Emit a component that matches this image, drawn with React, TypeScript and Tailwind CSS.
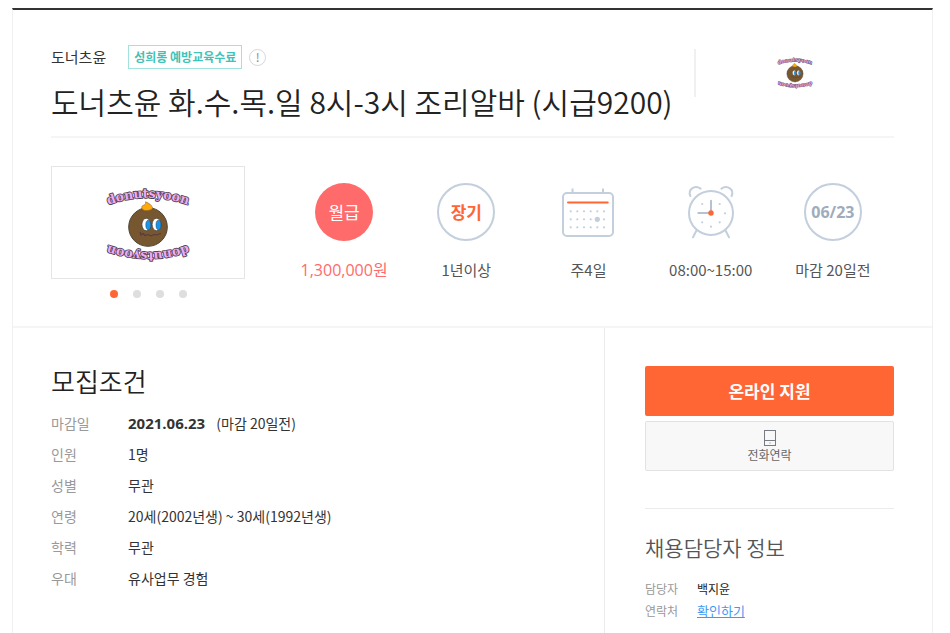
import { useState, type ReactNode } from "react";
import clsx from "clsx";

interface Row {
  label: string;
  value: ReactNode;
}

const CONDITIONS: Row[] = [
  {
    label: "마감일",
    value: (
      <>
        <strong className="mr-2 font-['Open_Sans',sans-serif] text-[15px] font-bold">2021.06.23</strong> (마감 20일전)
      </>
    ),
  },
  { label: "인원", value: "1명" },
  { label: "성별", value: "무관" },
  { label: "연령", value: "20세(2002년생) ~ 30세(1992년생)" },
  { label: "학력", value: "무관" },
  { label: "우대", value: "유사업무 경험" },
];

const DonutLogo = ({ id, className }: { id: string; className: string }) => {
  const word = (
    <text
      fontFamily="DejaVu Serif, serif"
      fontWeight="bold"
      fontSize="12.5"
      fill="#efabf5"
      stroke="#4f4452"
      strokeWidth="1.8"
      strokeLinejoin="round"
      paintOrder="stroke"
      textAnchor="middle"
    >
      <textPath href={`#${id}`} startOffset="50%">
        donutsyoon
      </textPath>
    </text>
  );

  return (
    <svg viewBox="0 0 84 76" className={className} overflow="visible" role="img" aria-label="donutsyoon">
      <defs>
        <path id={id} d="M-5 20.5 Q42 1 89 20.5" />
      </defs>
      {word}
      <g transform="rotate(180 42 38)">{word}</g>
      <circle cx="42" cy="40" r="19.3" fill="#775730" stroke="#4f4538" strokeWidth="1" />
      <path
        d="M36 21.5 C35 18 38 18.5 39 17.5 C40 16.5 39.5 15.5 39.5 14.8 C43 16 45.5 18 46.5 20.5 C47.5 23.5 37 25 36 21.5Z"
        fill="#ffa90a"
        stroke="#93692c"
        strokeWidth="0.6"
      />
      <ellipse cx="40.3" cy="37.5" rx="4.4" ry="6.2" fill="#fff" stroke="#40372c" strokeWidth="0.7" />
      <ellipse cx="42.3" cy="38" rx="2.5" ry="4.7" fill="#1595ec" stroke="#263e58" strokeWidth="0.5" />
      <ellipse cx="50.5" cy="37.5" rx="4.4" ry="6.2" fill="#fff" stroke="#40372c" strokeWidth="0.7" />
      <ellipse cx="52.5" cy="38" rx="2.5" ry="4.7" fill="#1595ec" stroke="#263e58" strokeWidth="0.5" />
      <path
        d="M34 45 L35 48 L37 46.5 L39 48.5 L42 47.5 L45 49 L48 47.5 L51 48 L54 46.5 L55 47"
        fill="none"
        stroke="#573b42"
        strokeWidth="1.1"
      />
    </svg>
  );
};

const CalendarIcon = () => (
  <svg viewBox="0 -1 58 58" className="size-[58px]" fill="none" stroke="#c3cfdd" strokeWidth="2">
    <rect x="4" y="9" width="50" height="43" rx="4" />
    <path d="M13.5 4.5V9M44 4.5V9" />
    <path d="M9 18.5H48.7" stroke="#ff6633" strokeLinecap="round" />
    <g fill="#c3cfdd" stroke="none">
      {[27.3, 35.3, 43.3].map((y) =>
        [11.7, 18.3, 25, 31.7, 38.3, 45].map((x) => <circle key={`${x}-${y}`} cx={x} cy={y} r="1.1" />),
      )}
      <circle cx="38.3" cy="35.3" r="2.6" />
    </g>
  </svg>
);

const ClockIcon = () => (
  <svg viewBox="0 -1 58 58" className="size-[58px]" fill="none" stroke="#c3cfdd" strokeWidth="2">
    <circle cx="29" cy="29" r="22" />
    <path d="M8.4 12C5.5 5.5 12.5 .5 18.6 4.6M49.6 12C52.5 5.5 45.5 .5 39.4 4.6" strokeLinecap="round" />
    <path d="M14.6 46.3L11 53.3M43.4 46.3L47 53.3" strokeLinecap="round" />
    <path d="M29 16.7V29H16.3" stroke="#b4c2d3" strokeLinecap="round" />
    <g fill="#c3cfdd" stroke="none">
      <circle cx="20.2" cy="20" r="1.1" />
      <circle cx="37.7" cy="20" r="1.1" />
      <circle cx="43" cy="29.3" r="1.1" />
      <circle cx="37.7" cy="38.3" r="1.1" />
      <circle cx="29" cy="42.7" r="1.1" />
      <circle cx="20.2" cy="38.3" r="1.1" />
    </g>
    <circle cx="29" cy="29" r="2.7" fill="#ff6633" stroke="none" />
  </svg>
);

const Stat = ({ icon, label, accent }: { icon: ReactNode; label: string; accent?: boolean }) => (
  <li className="flex flex-col items-center gap-[17px]">
    {icon}
    <span
      className={clsx(
        "whitespace-nowrap leading-6",
        accent ? "font-['Open_Sans','Noto_Sans_CJK_KR',sans-serif] text-base text-[#ff6b6b]" : "text-[15px] text-[#555]",
      )}
    >
      {label}
    </span>
  </li>
);

const Gallery = () => {
  const [active, setActive] = useState(0);

  return (
    <div className="w-[194px] shrink-0">
      <div className="flex h-[113px] items-center justify-center border border-[#e5e5e5]">
        <DonutLogo id="logo-arc-large" className="mt-1 h-[76px] w-[84px]" />
      </div>
      <div className="mt-[11px] flex justify-center gap-[15px]">
        {[0, 1, 2, 3].map((i) => (
          <button
            key={i}
            type="button"
            aria-label={`사진 ${i + 1}`}
            onClick={() => setActive(i)}
            className={clsx("size-2 rounded-full", i === active ? "bg-[#ff6633]" : "bg-[#dedede]")}
          />
        ))}
      </div>
    </div>
  );
};

export default function App() {
  return (
    <main className="min-h-screen bg-white pt-2 pr-[17px] pl-3 font-['Noto_Sans_CJK_KR',sans-serif] text-[#333]">
      <article className="flex min-h-[calc(100vh-8px)] flex-col border-x border-t-2 border-x-[#f0f0f0] border-t-[#333]">
        <div className="border-b-2 border-[#f5f5f5] px-[38px] pb-7">
          {/* Title */}
          <header className="flex items-start border-b-2 border-[#f5f5f5] pt-[35px] pb-[15px]">
            <div className="min-w-0 flex-1">
              <div className="flex items-center">
                <span className="text-[15px] leading-6">도너츠윤</span>
                <span className="ml-[22px] flex h-6 items-center border border-[#9fe3dc] px-[5px] text-xs font-bold whitespace-nowrap text-[#3fc3b8]">
                  성희롱 예방교육수료
                </span>
                <button
                  type="button"
                  aria-label="안내"
                  className="ml-[7px] flex size-[17px] items-center justify-center rounded-full border border-[#d6d6dc] text-xs leading-none text-[#8a8a94]"
                >
                  !
                </button>
              </div>
              <h1 className="mt-3 text-3xl leading-10 font-[350] whitespace-nowrap text-[#222]">
                도너츠윤 화.수.목.일 8시-3시 조리알바 (시급9200)
              </h1>
            </div>
            <div className="mt-1 flex h-12 w-[200px] items-center justify-center border-l-2 border-[#f0f0f0]">
              <DonutLogo id="logo-arc-small" className="h-8 w-9" />
            </div>
          </header>

          {/* Summary */}
          <div className="flex gap-[38px] pt-7">
            <Gallery />
            <ul className="grid flex-1 grid-cols-5 pt-[17px]">
              <Stat
                accent
                label="1,300,000원"
                icon={
                  <span className="flex size-[58px] items-center justify-center rounded-full bg-[#ff6b6b] text-[17px] text-white">
                    월급
                  </span>
                }
              />
              <Stat
                label="1년이상"
                icon={
                  <span className="flex size-[58px] items-center justify-center rounded-full border-2 border-[#c3cfdd] text-[17px] font-bold text-[#ff6633]">
                    장기
                  </span>
                }
              />
              <Stat label="주4일" icon={<CalendarIcon />} />
              <Stat label="08:00~15:00" icon={<ClockIcon />} />
              <Stat
                label="마감 20일전"
                icon={
                  <span className="flex size-[58px] items-center justify-center rounded-full border-2 border-[#c3cfdd] font-['Open_Sans',sans-serif] text-base font-bold text-[#9eacbc]">
                    06/23
                  </span>
                }
              />
            </ul>
          </div>
        </div>

        <div className="flex flex-1">
          {/* Conditions */}
          <section className="min-w-0 flex-1 pt-[33px] pl-[38px]">
            <h2 className="text-[26px] leading-10 font-[350] text-[#222]">모집조건</h2>
            <dl className="mt-[7px]">
              {CONDITIONS.map(({ label, value }) => (
                <div key={label} className="flex text-sm leading-[31px]">
                  <dt className="w-[77px] shrink-0 text-[#999]">{label}</dt>
                  <dd className="whitespace-nowrap">{value}</dd>
                </div>
              ))}
            </dl>
          </section>

          {/* Apply + contact */}
          <aside className="w-[328px] shrink-0 border-l border-[#ebebeb] pt-[38px] pr-[38px] pl-10">
            <button
              type="button"
              className="h-[50px] w-full rounded-xs bg-[#ff6633] text-[17px] font-bold text-white"
            >
              온라인 지원
            </button>
            <button
              type="button"
              className="mt-[5px] flex h-[50px] w-full flex-col items-center justify-center rounded-xs border border-[#e2e2e2] bg-[#f8f8f8] pt-0.5 text-xs leading-[18px] text-[#666]"
            >
              <svg viewBox="0 0 12 16" className="h-4 w-3" fill="none" stroke="#777b84">
                <rect x="0.5" y="0.5" width="11" height="15" />
                <path d="M.5 10.5H11.5" />
                <rect x="5.5" y="12.5" width="1" height="1" fill="#777b84" stroke="none" />
              </svg>
              전화연락
            </button>

            <section className="mt-[37px] border-t border-[#ebebeb] pt-[22px]">
              <h2 className="text-[21px] leading-8 font-[350] text-[#555]">채용담당자 정보</h2>
              <dl className="mt-[15px] text-xs leading-[22px]">
                <div className="flex">
                  <dt className="w-[52px] text-[#999]">담당자</dt>
                  <dd className="text-[#222]">백지윤</dd>
                </div>
                <div className="flex">
                  <dt className="w-[52px] text-[#999]">연락처</dt>
                  <dd>
                    <a href="#contact" className="text-[13px] text-[#3d9bf5] underline">
                      확인하기
                    </a>
                  </dd>
                </div>
              </dl>
            </section>
          </aside>
        </div>
      </article>
    </main>
  );
}
